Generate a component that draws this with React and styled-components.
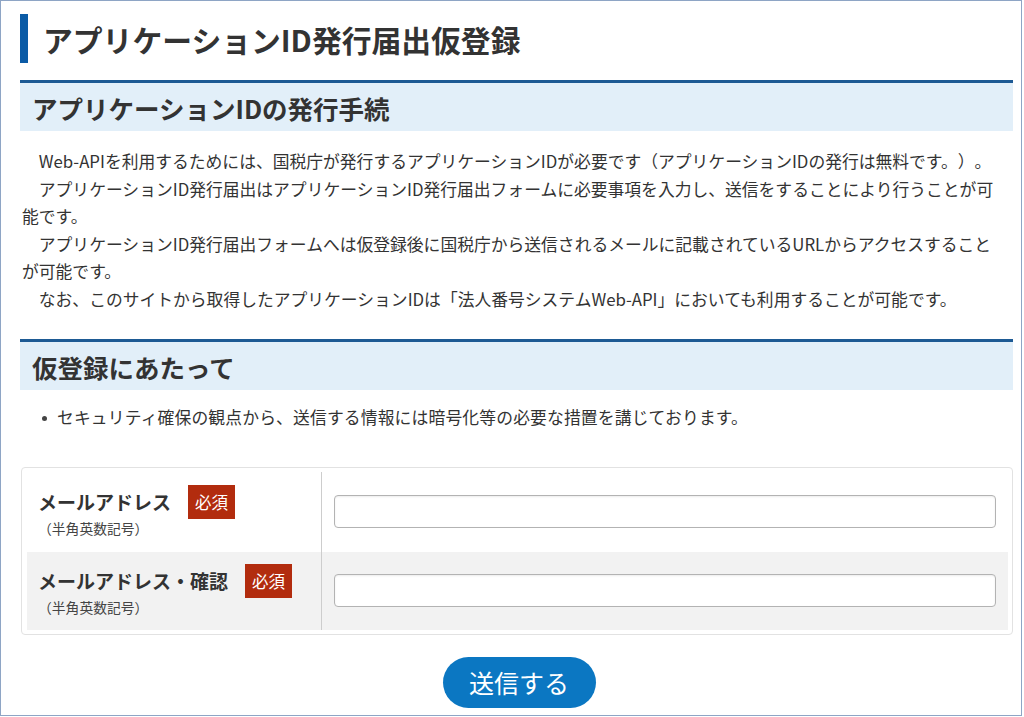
import styled, { createGlobalStyle } from "styled-components";

const GlobalStyle = createGlobalStyle`
  body {
    margin: 0;
    background: #fff;
    font-family: "Noto Sans CJK JP", "Noto Sans", sans-serif;
    color: #333;
    text-spacing-trim: space-all;
  }
`;

const Frame = styled.div`
  box-sizing: border-box;
  width: 1022px;
  height: 716px;
  border: 1px solid #8ea5c5;
  padding: 13px 8px 0 19px;
  overflow: hidden;
`;

const Title = styled.h1`
  margin: 0;
  height: 49px;
  display: flex;
  align-items: center;
  border-left: 8px solid #0b5ba6;
  padding-left: 15px;
  font-size: 29.8px;
  font-weight: 700;
  color: #333;
`;

const SectionHeading = styled.h2`
  box-sizing: border-box;
  margin: ${(p) => p.$gap}px 0 0;
  height: 51px;
  display: flex;
  align-items: center;
  border-top: 3px solid #1d5a94;
  background: #e2eff9;
  padding-left: 12px;
  font-size: 25.5px;
  font-weight: 700;
  color: #333;
`;

const Body = styled.div`
  margin-top: 17px;
  padding: 0 3px 0 2px;
  font-size: 16.8px;
  line-height: 27.5px;
`;

const Para = styled.p`
  margin: 0;
  text-indent: 1em;
`;

const Notes = styled.ul`
  margin: 14px 0 0;
  padding: 0 0 0 37px;
  list-style: none;
  font-size: 16.8px;
  line-height: 27.5px;
  letter-spacing: 0.15px;
`;

const Note = styled.li`
  position: relative;
  &::before {
    content: "";
    position: absolute;
    left: -15px;
    top: 12px;
    width: 5px;
    height: 5px;
    border-radius: 50%;
    background: #444;
  }
`;

const Form = styled.form`
  margin: 35px 0 0;
`;

const Fields = styled.div`
  box-sizing: border-box;
  margin-left: 1px;
  border: 1px solid #e2e2e2;
  border-radius: 4px;
  padding: 4px 4px 4px 5px;
`;

const Row = styled.div`
  display: grid;
  grid-template-columns: 295px 1fr;
  height: ${(p) => p.$height}px;
  background: ${(p) => (p.$shaded ? "#f2f2f2" : "#fff")};
`;

const LabelCell = styled.div`
  display: flex;
  flex-direction: column;
  justify-content: center;
  padding-left: 11px;
  padding-bottom: 2px;
  border-right: 1px solid #cdcdcd;
`;

const LabelLine = styled.div`
  display: flex;
  align-items: center;
  gap: 17px;
`;

const Label = styled.label`
  font-size: 19px;
  font-weight: 700;
  color: #333;
`;

const Required = styled.span`
  display: inline-flex;
  align-items: center;
  justify-content: center;
  width: 47px;
  height: 34px;
  background: #b22c0e;
  color: #fff;
  font-size: 16.5px;
`;

const Hint = styled.div`
  font-size: 13.8px;
  line-height: 18px;
  color: #444;
`;

const InputCell = styled.div`
  display: flex;
  align-items: center;
  padding: 0 12px 0 12px;
`;

const TextInput = styled.input`
  box-sizing: border-box;
  width: 100%;
  height: 33px;
  border: 1px solid #b3b3b3;
  border-radius: 4px;
  background: #fff;
  box-shadow: inset 0 1px 2px rgba(0, 0, 0, 0.08);
  font-size: 16px;
`;

const Actions = styled.div`
  display: flex;
  justify-content: center;
  margin-top: 22px;
  padding-left: 5px;
`;

const SubmitButton = styled.button`
  width: 153px;
  height: 51px;
  border: none;
  border-radius: 26px;
  background: #0b77c2;
  color: #fff;
  font-family: "Noto Sans CJK JP", sans-serif;
  font-size: 25px;
  cursor: pointer;
`;

const fields = [
  { id: "mail", label: "メールアドレス", height: 80 },
  { id: "mail-confirm", label: "メールアドレス・確認", height: 78, shaded: true },
];

export default function App() {
  return (
    <Frame>
      <GlobalStyle />
      <Title>アプリケーションID発行届出仮登録</Title>

      <SectionHeading $gap={17}>アプリケーションIDの発行手続</SectionHeading>
      <Body>
        <Para>
          Web-APIを利用するためには、国税庁が発行するアプリケーションIDが必要です（アプリケーションIDの発行は無料です。）。
        </Para>
        <Para>
          アプリケーションID発行届出はアプリケーションID発行届出フォームに必要事項を入力し、送信をすることにより行うことが可<br />能です。
        </Para>
        <Para>
          アプリケーションID発行届出フォームへは仮登録後に国税庁から送信されるメールに記載されているURLからアクセスすること<br />が可能です。
        </Para>
        <Para>
          なお、このサイトから取得したアプリケーションIDは「法人番号システムWeb-API」においても利用することが可能です。
        </Para>
      </Body>

      <SectionHeading $gap={26}>仮登録にあたって</SectionHeading>
      <Notes>
        <Note>セキュリティ確保の観点から、送信する情報には暗号化等の必要な措置を講じております。</Note>
      </Notes>

      <Form onSubmit={(ev) => ev.preventDefault()}>
        <Fields>
          {fields.map((f) => (
            <Row key={f.id} $height={f.height} $shaded={f.shaded}>
              <LabelCell>
                <LabelLine>
                  <Label htmlFor={f.id}>{f.label}</Label>
                  <Required>必須</Required>
                </LabelLine>
                <Hint>（半角英数記号）</Hint>
              </LabelCell>
              <InputCell>
                <TextInput id={f.id} type="email" />
              </InputCell>
            </Row>
          ))}
        </Fields>
        <Actions>
          <SubmitButton type="submit">送信する</SubmitButton>
        </Actions>
      </Form>
    </Frame>
  );
}
